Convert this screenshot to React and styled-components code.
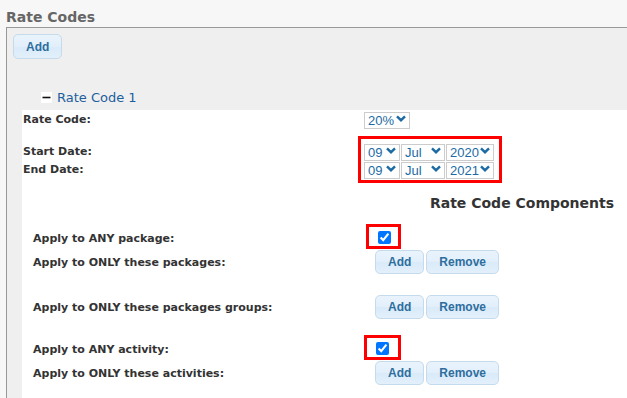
import React from 'react';
import styled, { createGlobalStyle } from 'styled-components';

const GlobalStyle = createGlobalStyle`
    html, body {
        margin: 0;
        background: #f7f7f7;
        overflow: hidden;
    }
    body {
        font-family: "DejaVu Sans", Verdana, sans-serif;
    }
`;

const Dropdown = ({value, width}) => (
    <SelectBox $width={width}>
        <Select defaultValue={value}>
            <option>{value}</option>
        </Select>
        <Chevron width="10" height="7" viewBox="0 0 10 7">
            <path d="M1 1.3 L5 5.2 L9 1.3" fill="none" stroke="#1c6aa3" strokeWidth="2.4"/>
        </Chevron>
    </SelectBox>
);

const DateSelects = ({year}) => (
    <SelectRow>
        <Dropdown value="09" width={36}/>
        <Dropdown value="Jul" width={44}/>
        <Dropdown value={year} width={48}/>
    </SelectRow>
);

const AddRemove = () => (
    <ButtonPair>
        <Button>Add</Button>
        <Button>Remove</Button>
    </ButtonPair>
);

const App = () => {
    return (
        <Page>
            <GlobalStyle/>
            <Title>Rate Codes</Title>
            <Panel>
                <Button $tall>Add</Button>
                <AccordionHeader>
                    <svg width="11" height="11" viewBox="0 0 11 11">
                        <rect width="11" height="11" fill="#fff"/>
                        <line x1="1.5" y1="5.5" x2="9.5" y2="5.5" stroke="#111" strokeWidth="1.6"/>
                    </svg>
                    <span>Rate Code 1</span>
                </AccordionHeader>
                <Content>
                    <InfoRow>
                        <Label>Rate Code:</Label>
                        <div>
                            <Dropdown value="20%" width={46}/>
                        </div>
                    </InfoRow>
                    <DateBlock>
                        <Label>Start Date:</Label>
                        <Label>End Date:</Label>
                        <Marked>
                            <DateSelects year="2020"/>
                            <DateSelects year="2021"/>
                        </Marked>
                    </DateBlock>
                    <SectionTitle>Rate Code Components</SectionTitle>
                    <Components>
                        <CompRow $h={23}>
                            <Label>Apply to ANY package:</Label>
                            <CheckMark><Check type="checkbox" defaultChecked/></CheckMark>
                        </CompRow>
                        <CompRow>
                            <Label>Apply to ONLY these packages:</Label>
                            <AddRemove/>
                        </CompRow>
                        <CompRow $top={21}>
                            <Label>Apply to ONLY these packages groups:</Label>
                            <AddRemove/>
                        </CompRow>
                        <CompRow $top={19} $h={23}>
                            <Label>Apply to ANY activity:</Label>
                            <CheckMark $wide><Check type="checkbox" defaultChecked/></CheckMark>
                        </CompRow>
                        <CompRow>
                            <Label>Apply to ONLY these activities:</Label>
                            <AddRemove/>
                        </CompRow>
                    </Components>
                </Content>
            </Panel>
        </Page>
    );
};

export default App;

// Style
const
    Page = styled.div`
    width: 1100px;
    min-height: 398px;
`,
    Title = styled.h1`
    margin: 0 0 1px;
    padding: 9px 6px 0;
    font-size: 14px;
    line-height: 17px;
    font-weight: bold;
    color: #666;
`,
    Panel = styled.div`
    margin-left: 6px;
    border-top: 1px solid #999;
    border-left: 1px solid #999;
    background: #efefef;
    padding: 6px;
    min-height: 380px;
`,
    Button = styled.button`
    height: ${p => p.$tall ? 25 : 24}px;
    padding: 0 12px;
    border: 1px solid #c5dbec;
    border-radius: 5px;
    background: linear-gradient(#e9f3fc 0%, #e2effb 50%, #d9eaf9 51%, #e3f0fb 100%);
    color: #2e6e9e;
    font-family: "Liberation Sans", Arial, sans-serif;
    font-size: 12px;
    font-weight: bold;
    cursor: pointer;
`,
    ButtonPair = styled.div`
    display: flex;
    gap: 2px;
`,
    AccordionHeader = styled.div`
    display: flex;
    align-items: center;
    gap: 5px;
    height: 16px;
    margin: 30px 0 0 28px;
    font-size: 13px;
    color: #1d5e9c;
`,
    Content = styled.div`
    margin: 5px 0 0 9px;
    width: 1000px;
    min-height: 300px;
    background: #fff;
`,
    Label = styled.div`
    font-size: 11px;
    font-weight: bold;
    color: #333;
    white-space: nowrap;
`,
    InfoRow = styled.div`
    display: grid;
    grid-template-columns: 341px auto;
    align-items: center;
    height: 17px;
    padding-left: 1px;
`,
    DateBlock = styled.div`
    display: grid;
    grid-template-columns: 341px auto;
    grid-template-rows: 18px 18px;
    align-items: center;
    margin-top: 15px;
    padding-left: 1px;

    & > ${Label} {
        grid-column: 1;
    }
`,
    Marked = styled.div`
    grid-column: 2;
    grid-row: 1 / span 2;
    align-self: start;
    justify-self: start;
    display: flex;
    flex-direction: column;
    gap: 1px;
    padding-right: 2px;
    outline: 3px solid #f00;
    outline-offset: 3px;
`,
    SelectRow = styled.div`
    display: flex;
    gap: 1px;
`,
    SelectBox = styled.span`
    position: relative;
    display: inline-block;
    width: ${p => p.$width}px;
    height: 17px;
`,
    Select = styled.select`
    appearance: none;
    width: 100%;
    height: 17px;
    padding: 0 0 0 3px;
    border: 1px solid #ccc;
    border-radius: 0;
    background: #fff;
    color: #1c6aa3;
    font-family: "Liberation Sans", Arial, sans-serif;
    font-size: 13px;
    line-height: 15px;
`,
    Chevron = styled.svg`
    position: absolute;
    right: 4px;
    top: 5px;
    pointer-events: none;
`,
    SectionTitle = styled.div`
    margin-top: 17px;
    text-align: center;
    font-size: 14px;
    line-height: 17px;
    font-weight: bold;
    color: #333;
`,
    Components = styled.div`
    margin-top: 15px;
    padding-left: 11px;
`,
    CompRow = styled.div`
    display: grid;
    grid-template-columns: 342px auto;
    align-items: center;
    height: ${p => p.$h || 24}px;
    margin-top: ${p => p.$top || 0}px;
`,
    CheckMark = styled.div`
    align-self: start;
    justify-self: start;
    width: ${p => p.$wide ? 31 : 29}px;
    height: 19px;
    margin-left: ${p => p.$wide ? -8 : -6}px;
    outline: 3px solid #f00;
`,
    Check = styled.input`
    display: block;
    width: 13px;
    height: 13px;
    margin: 4px 0 0 9px;
`;
